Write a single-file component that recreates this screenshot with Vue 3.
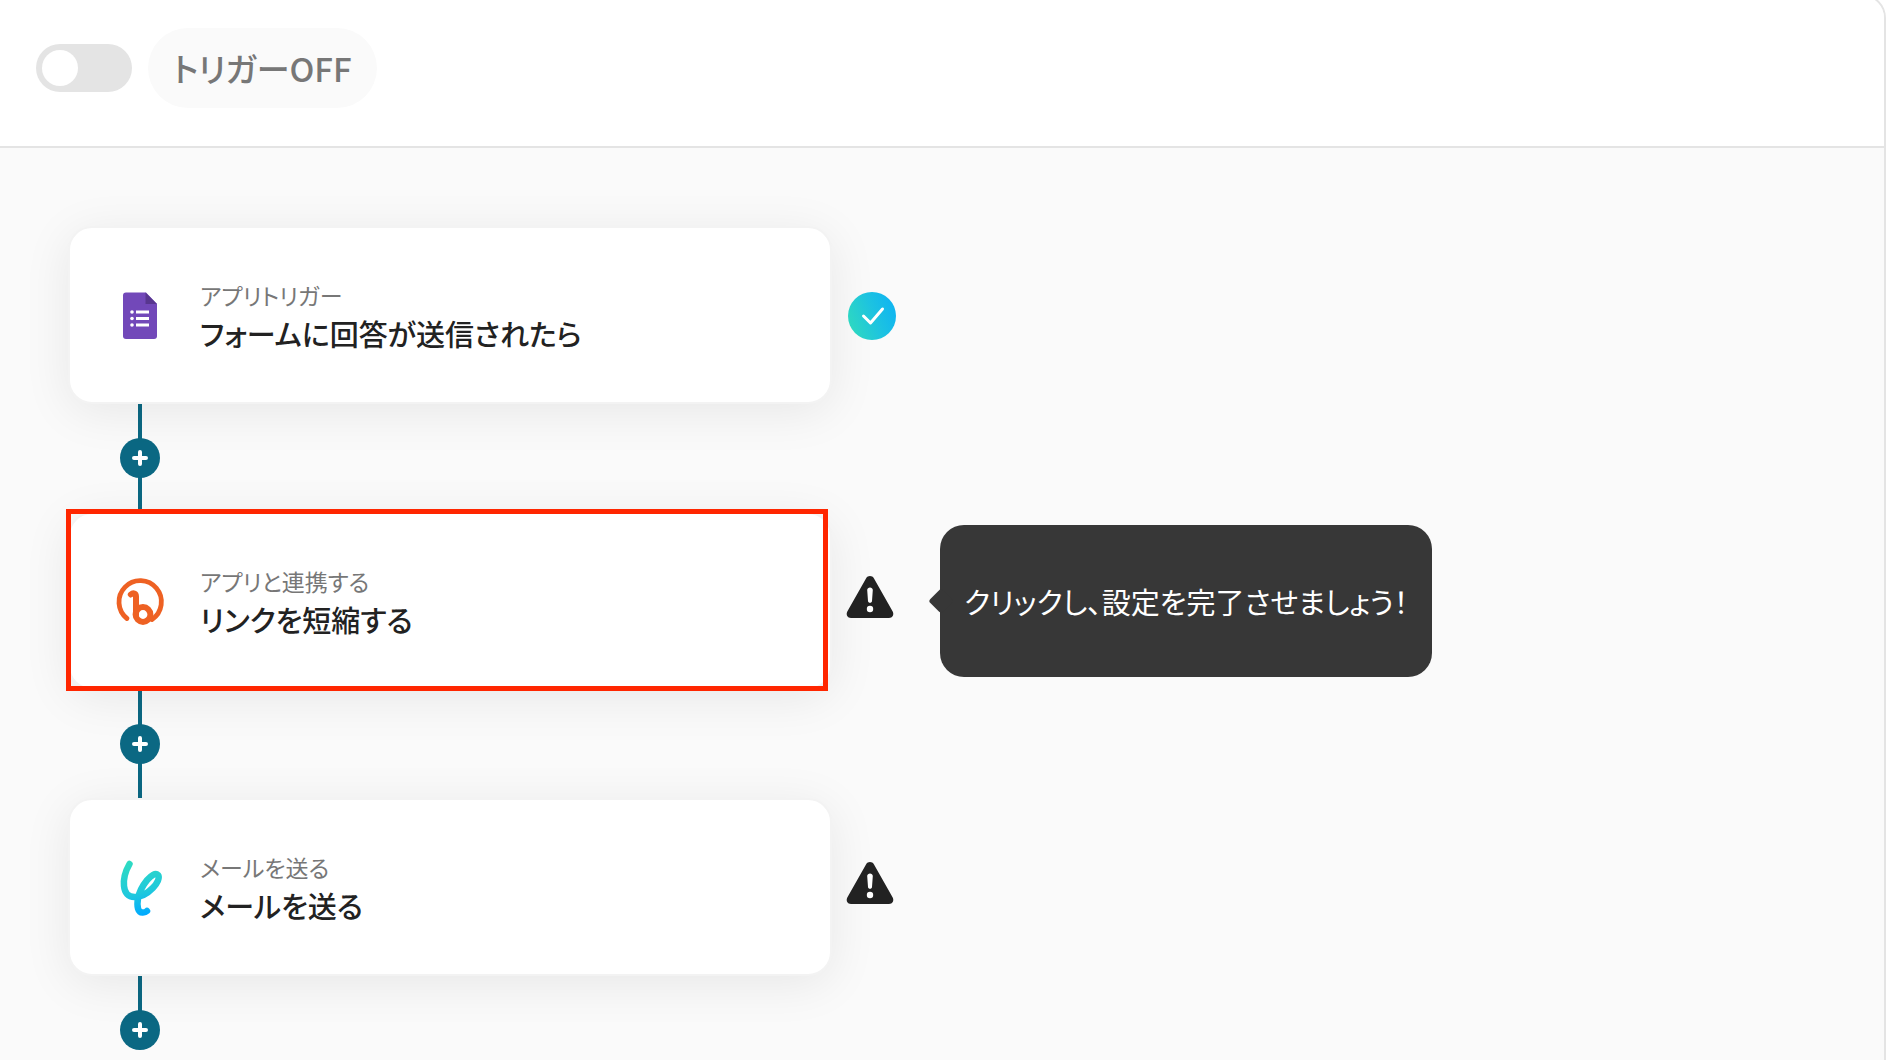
<script setup>
import { ref } from 'vue'

const triggerOn = ref(false)

const steps = [
  { id: 'form', kind: 'アプリトリガー', title: 'フォームに回答が送信されたら', done: true },
  { id: 'link', kind: 'アプリと連携する', title: 'リンクを短縮する', done: false, highlighted: true, hint: 'クリックし、設定を完了させましょう！' },
  { id: 'mail', kind: 'メールを送る', title: 'メールを送る', done: false },
]
</script>

<template>
  <main class="panel">
    <header class="bar">
      <input id="trigger" v-model="triggerOn" class="switch" type="checkbox" role="switch" />
      <label class="switch-label" for="trigger">トリガー{{ triggerOn ? 'ON' : 'OFF' }}</label>
    </header>

    <section class="flow">
      <div v-for="step in steps" :key="step.id" class="step">
        <div class="row">
          <button class="card" :class="{ highlighted: step.highlighted }" type="button">
            <svg v-if="step.id === 'form'" class="icon" viewBox="0 0 56 56" aria-hidden="true">
              <path fill="#7248b9" d="M14 5.500h20l11 11.500V49a3 3 0 0 1-3 3H14a3 3 0 0 1-3-3V8.500a3 3 0 0 1 3-3z" />
              <path fill="#58368f" d="M33.500 5.500 45 17H33.500z" />
              <path fill="#fff" d="M24 23.500h13v3H24zm0 6.500h13v3H24zM24 36.500h13v3H24z" />
              <g fill="#fff"><circle cx="20" cy="25" r="1.800" /><circle cx="20" cy="31.500" r="1.800" /><circle cx="20" cy="38" r="1.800" /></g>
            </svg>
            <svg v-else-if="step.id === 'link'" class="icon" viewBox="0 0 56 56" aria-hidden="true">
              <g fill="none" stroke="#ee6123" stroke-linecap="round">
                <path stroke-width="4.800" d="M15 45.500A21.200 21.200 0 1 1 40 46.500" />
                <path stroke-width="6" d="M18.800 21.500c2.500-2 5.200-1.200 5.200 2V42" />
                <circle cx="31" cy="41.500" r="7.400" stroke-width="6" />
              </g>
            </svg>
            <svg v-else class="icon" viewBox="0 0 56 56" aria-hidden="true">
              <defs>
                <linearGradient id="mail-ink" gradientUnits="userSpaceOnUse" x1="20" y1="0" x2="32" y2="56">
                  <stop offset="0" stop-color="#2fdcc0" />
                  <stop offset=".6" stop-color="#20c9dc" />
                  <stop offset="1" stop-color="#00aaff" />
                </linearGradient>
              </defs>
              <path fill="none" stroke="url(#mail-ink)" stroke-width="6.500" stroke-linecap="round" stroke-linejoin="round" d="M17.500 5C9.500 19 9 38.500 23 38 36 37.500 50 21.500 46 16 41 11 28.500 27 26 39.500 24.500 47.500 26 54 31 53.500c2 0 3-.5 4-1.500" />
            </svg>
            <span class="texts">
              <span class="kind">{{ step.kind }}</span>
              <span class="title">{{ step.title }}</span>
            </span>
          </button>

          <svg v-if="step.done" class="status" viewBox="0 0 48 48" role="img" aria-label="設定済み">
            <defs>
              <linearGradient id="done-fill" x1="0" y1=".7" x2="1" y2=".3">
                <stop offset="0" stop-color="#2ed9c0" />
                <stop offset=".55" stop-color="#1dc3e0" />
                <stop offset="1" stop-color="#0fb4f2" />
              </linearGradient>
            </defs>
            <circle cx="24" cy="25" r="24" fill="url(#done-fill)" />
            <path d="M15.500 25 22.500 32 34.500 18" fill="none" stroke="#fff" stroke-width="3" stroke-linecap="round" stroke-linejoin="round" />
          </svg>
          <svg v-else class="status" viewBox="0 0 48 48" role="img" aria-label="未設定">
            <path d="M18 1.500c1.800-3.200 6.200-3.200 8 0l18.700 33c1.600 3-.2 6.500-3.700 6.500H3c-3.500 0-5.300-3.500-3.700-6.500z" fill="#222" />
            <path d="M19.200 13c0-3.400 5.600-3.400 5.600 0l-.8 11c0 2.400-4 2.400-4 0z" fill="#fff" />
            <circle cx="22" cy="32" r="3.200" fill="#fff" />
          </svg>

          <p v-if="step.hint" class="hint">{{ step.hint }}</p>
        </div>

        <div class="connector">
          <button class="add" type="button" aria-label="追加">
            <svg viewBox="0 0 40 40" aria-hidden="true">
              <path d="M20 14v12M14 20h12" stroke="#fff" stroke-width="4" stroke-linecap="round" />
            </svg>
          </button>
        </div>
      </div>
    </section>
  </main>
</template>

<style>
body {
  margin: 0;
  background: #fff;
}
</style>

<style scoped>
.panel {
  box-sizing: border-box;
  min-height: calc(100vh + 6px);
  margin: -6px 2px 0 0;
  border: solid #e4e4e4;
  border-width: 2px 2px 0 0;
  border-top-right-radius: 24px;
  overflow: hidden;
  background: #fafafa;
  font-family: "Noto Sans CJK JP", sans-serif;
  font-feature-settings: "palt";
}

.bar {
  display: flex;
  align-items: center;
  gap: 16px;
  padding: 32px 36px 38px;
  border-bottom: 2px solid #e4e4e4;
  background: #fff;
}

.switch {
  appearance: none;
  box-sizing: border-box;
  width: 96px;
  height: 48px;
  margin: 0;
  padding: 6px;
  border-radius: 24px;
  background: #e4e4e4;
  cursor: pointer;
}

.switch::before {
  content: "";
  display: block;
  width: 36px;
  height: 36px;
  border-radius: 50%;
  background: #fff;
}

.switch:checked {
  background: #0b6883;
}

.switch:checked::before {
  margin-left: auto;
}

.switch-label {
  padding: 0 25px;
  border-radius: 40px;
  background: #fafafa;
  color: #777;
  font-size: 33px;
  font-weight: 500;
  line-height: 80px;
}

.flow {
  padding: 78px 68px 0;
}

.row {
  display: flex;
  align-items: center;
}

.card {
  position: relative;
  display: flex;
  align-items: center;
  gap: 32px;
  box-sizing: border-box;
  width: 764px;
  height: 178px;
  padding: 0 42px;
  border: 2px solid #f3f3f3;
  border-radius: 24px;
  background: #fff;
  box-shadow: 0 8px 48px rgba(0, 0, 0, 0.08);
  font: inherit;
  font-feature-settings: inherit;
  text-align: left;
  cursor: pointer;
}

.highlighted::after {
  content: "";
  position: absolute;
  inset: -5px 2px -3px -4px;
  border: 5px solid #ff2600;
}

.icon {
  width: 56px;
  height: 56px;
  overflow: visible;
}

.texts {
  display: flex;
  flex-direction: column;
}

.kind {
  color: #777;
  font-size: 23px;
  line-height: 36px;
}

.title {
  color: #222;
  font-size: 29px;
  font-weight: 500;
  line-height: 40px;
}

.status {
  position: relative;
  width: 48px;
  height: 48px;
  margin-left: 16px;
  overflow: visible;
}

.hint {
  position: relative;
  margin: 0 0 0 44px;
  padding: 0 24px;
  border-radius: 24px;
  background: #373737;
  color: #fff;
  font-size: 29px;
  line-height: 152px;
}

.hint::before {
  content: "";
  position: absolute;
  top: 50%;
  left: -8px;
  width: 18px;
  height: 18px;
  margin-top: -9px;
  border-radius: 3px;
  background: #373737;
  transform: rotate(45deg);
}

.connector {
  display: flex;
  align-items: center;
  width: 40px;
  height: 108px;
  margin-left: 52px;
  background: linear-gradient(#0b6883, #0b6883) center / 4px 100% no-repeat;
}

.step:last-child .connector {
  height: 98px;
  align-items: flex-start;
  padding-top: 34px;
  box-sizing: border-box;
  background-position: top;
  background-size: 4px 50%;
}

.add {
  width: 40px;
  height: 40px;
  padding: 0;
  border: 0;
  border-radius: 50%;
  background: #0b6883;
  cursor: pointer;
}

.add svg {
  display: block;
}
</style>
